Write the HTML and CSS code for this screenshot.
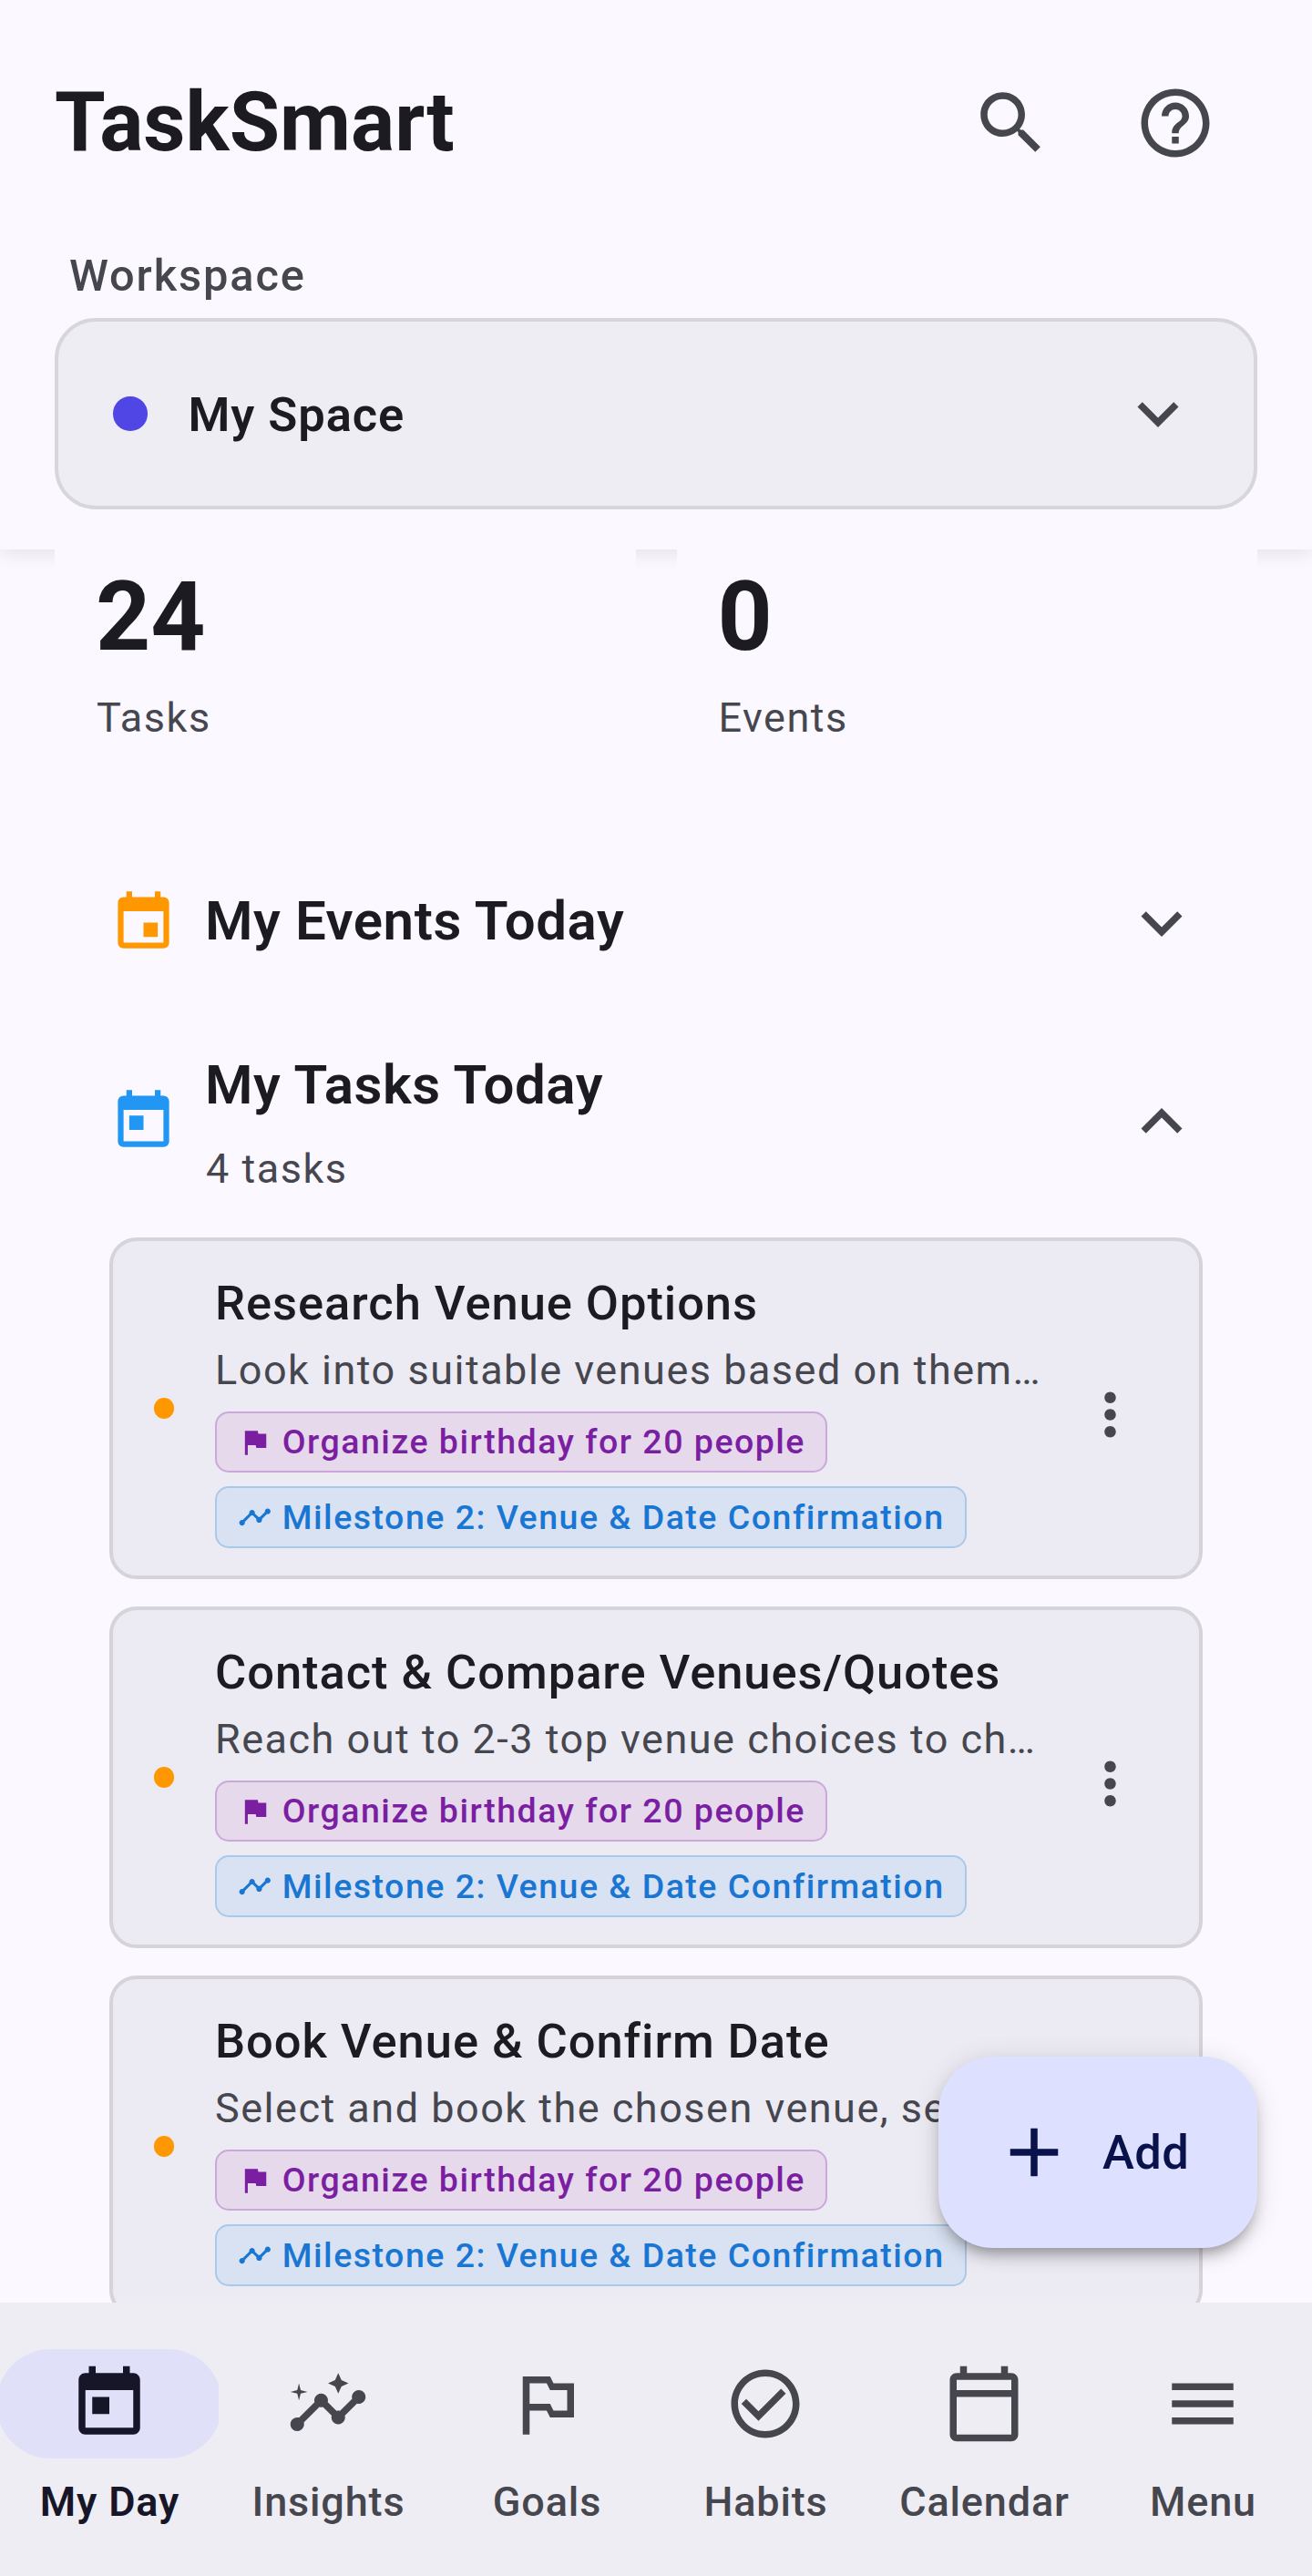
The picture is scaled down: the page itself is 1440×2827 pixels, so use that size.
FILE: index.html
```html
<!DOCTYPE html>
<html lang="en">
<head>
<meta charset="utf-8">
<title>TaskSmart</title>
<link rel="stylesheet" href="styles.css">
</head>
<body>
<svg class="sprite" aria-hidden="true">
  <symbol id="search" viewBox="0 0 24 24"><path d="M15.5 14h-.79l-.28-.27C15.41 12.59 16 11.11 16 9.5 16 5.91 13.09 3 9.5 3S3 5.91 3 9.5 5.91 16 9.5 16c1.61 0 3.09-.59 4.23-1.57l.27.28v.79l5 4.99L20.49 19l-4.99-5zm-6 0C7.01 14 5 11.99 5 9.5S7.01 5 9.5 5 14 7.01 14 9.5 11.99 14 9.5 14z"/></symbol>
  <symbol id="help" viewBox="0 0 24 24"><path d="M11 18h2v-2h-2v2zm1-16C6.48 2 2 6.48 2 12s4.48 10 10 10 10-4.480 10-10S17.52 2 12 2zm0 18c-4.410 0-8-3.590-8-8s3.590-8 8-8 8 3.590 8 8-3.590 8-8 8zm0-14c-2.210 0-4 1.790-4 4h2c0-1.100.9-2 2-2s2 .9 2 2c0 2-3 1.750-3 5h2c0-2.250 3-2.500 3-5 0-2.210-1.790-4-4-4z"/></symbol>
  <symbol id="more" viewBox="0 0 24 24"><path d="M16.59 8.59L12 13.17 7.41 8.59 6 10l6 6 6-6z"/></symbol>
  <symbol id="less" viewBox="0 0 24 24"><path d="M12 8l-6 6 1.410 1.410L12 10.830l4.590 4.580L18 14z"/></symbol>
  <symbol id="event" viewBox="0 0 24 24"><path d="M17 12h-5v5h5v-5zM16 1v2H8V1H6v2H5c-1.110 0-1.990.9-1.990 2L3 19c0 1.100.89 2 2 2h14c1.100 0 2-.9 2-2V5c0-1.100-.9-2-2-2h-1V1h-2zm3 18H5V8h14v11z"/></symbol>
  <symbol id="today" viewBox="0 0 24 24"><path d="M19 3h-1V1h-2v2H8V1H6v2H5c-1.110 0-1.990.9-1.990 2L3 19c0 1.100.89 2 2 2h14c1.100 0 2-.9 2-2V5c0-1.100-.9-2-2-2zm0 16H5V8h14v11zM7 10h5v5H7z"/></symbol>
  <symbol id="flag" viewBox="0 0 24 24"><path d="M14.400 6L14 4H5v17h2v-7h5.600l.4 2h7V6z"/></symbol>
  <symbol id="timeline" viewBox="0 0 24 24"><path d="M23 8c0 1.100-.9 2-2 2-.18 0-.35-.02-.51-.07l-3.560 3.550c.05.16.07.34.07.52 0 1.100-.9 2-2 2s-2-.9-2-2c0-.18.02-.36.07-.52l-2.550-2.550c-.16.05-.34.07-.52.07s-.36-.02-.52-.07l-4.550 4.560c.05.16.07.33.07.51 0 1.100-.9 2-2 2s-2-.9-2-2 .9-2 2-2c.18 0 .35.02.51.07l4.560-4.550C8.020 9.360 8 9.180 8 9c0-1.100.9-2 2-2s2 .9 2 2c0 .18-.02.36-.07.52l2.550 2.550c.16-.05.34-.07.52-.07s.36.02.52.07l3.550-3.560C19.020 8.350 19 8.180 19 8c0-1.100.9-2 2-2s2 .9 2 2z"/></symbol>
  <symbol id="dots" viewBox="0 0 24 24"><path d="M12 8c1.100 0 2-.9 2-2s-.9-2-2-2-2 .9-2 2 .9 2 2 2zm0 2c-1.100 0-2 .9-2 2s.9 2 2 2 2-.9 2-2-.9-2-2-2zm0 6c-1.100 0-2 .9-2 2s.9 2 2 2 2-.9 2-2-.9-2-2-2z"/></symbol>
  <symbol id="add" viewBox="0 0 24 24"><path d="M19 13h-6v6h-2v-6H5v-2h6V5h2v6h6v2z"/></symbol>
  <symbol id="insights" viewBox="0 0 24 24"><path d="M21 8c-1.450 0-2.260 1.440-1.930 2.510l-3.550 3.560c-.3-.09-.74-.09-1.040 0l-2.550-2.550C12.270 10.450 11.460 9 10 9c-1.450 0-2.270 1.440-1.930 2.520l-4.560 4.550C2.440 15.740 1 16.550 1 18c0 1.100.9 2 2 2 1.450 0 2.260-1.440 1.930-2.510l4.550-4.560c.3.09.74.09 1.040 0l2.550 2.550C12.730 16.550 13.540 18 15 18c1.450 0 2.270-1.440 1.930-2.520l3.560-3.550c1.070.33 2.510-.48 2.510-1.930 0-1.100-.9-2-2-2z"/><path d="M15 9l.94-2.070L18 6l-2.060-.93L15 3l-.92 2.070L12 6l2.080.93zM3.500 11L4 9l2-.5L4 8l-.5-2L3 8l-2 .5L3 9z"/></symbol>
  <symbol id="goal" viewBox="0 0 24 24"><path d="M14 6l-1-2H5v17h2v-7h5l1 2h7V6h-6zm4 8h-4l-1-2H7V6h5l1 2h5v6z"/></symbol>
  <symbol id="check" viewBox="0 0 24 24"><path d="M16.590 7.580L10 14.170l-3.590-3.580L5 12l5 5 8-8zM12 2C6.480 2 2 6.480 2 12s4.480 10 10 10 10-4.480 10-10S17.520 2 12 2zm0 18c-4.420 0-8-3.580-8-8s3.580-8 8-8 8 3.580 8 8-3.580 8-8 8z"/></symbol>
  <symbol id="calendar" viewBox="0 0 24 24"><path d="M20 3h-1V1h-2v2H7V1H5v2H4c-1.100 0-2 .9-2 2v16c0 1.100.9 2 2 2h16c1.100 0 2-.9 2-2V5c0-1.100-.9-2-2-2zm0 18H4V10h16v11zm0-13H4V5h16v3z"/></symbol>
  <symbol id="menu" viewBox="0 0 24 24"><path d="M3 18h18v-2H3v2zm0-5h18v-2H3v2zm0-7v2h18V6H3z"/></symbol>
</svg>

<header class="header">
  <div class="title-row">
    <h1 class="title">TaskSmart</h1>
    <button class="icon-button" aria-label="Search"><svg class="icon"><use href="#search"/></svg></button>
    <button class="icon-button" aria-label="Help"><svg class="icon"><use href="#help"/></svg></button>
  </div>
  <div class="workspace-label">Workspace</div>
  <div class="workspace">
    <span class="workspace-dot"></span>
    <span class="workspace-name">My Space</span>
    <svg class="icon"><use href="#more"/></svg>
  </div>
</header>

<main class="content">
  <section class="stats">
    <div class="stat"><div class="stat-value">24</div><div class="stat-label">Tasks</div></div>
    <div class="stat"><div class="stat-value">0</div><div class="stat-label">Events</div></div>
  </section>

  <section class="section-head section-head-events">
    <svg class="section-icon orange"><use href="#event"/></svg>
    <h2 class="section-title">My Events Today</h2>
    <svg class="icon"><use href="#more"/></svg>
  </section>

  <section class="section-head section-head-tasks">
    <svg class="section-icon blue"><use href="#today"/></svg>
    <div class="section-text">
      <h2 class="section-title">My Tasks Today</h2>
      <div class="section-sub">4 tasks</div>
    </div>
    <svg class="icon"><use href="#less"/></svg>
  </section>

  <div class="tasks">
    <article class="task">
      <span class="task-dot"></span>
      <div class="task-body">
        <h3 class="task-title">Research Venue Options</h3>
        <p class="task-desc">Look into suitable venues based on them…</p>
        <div class="chips">
          <span class="chip goal"><svg class="chip-icon"><use href="#flag"/></svg>Organize birthday for 20 people</span>
          <span class="chip milestone"><svg class="chip-icon"><use href="#timeline"/></svg>Milestone 2: Venue &amp; Date Confirmation</span>
        </div>
      </div>
      <svg class="task-menu"><use href="#dots"/></svg>
    </article>
    <article class="task">
      <span class="task-dot"></span>
      <div class="task-body">
        <h3 class="task-title">Contact &amp; Compare Venues/Quotes</h3>
        <p class="task-desc">Reach out to 2-3 top venue choices to ch…</p>
        <div class="chips">
          <span class="chip goal"><svg class="chip-icon"><use href="#flag"/></svg>Organize birthday for 20 people</span>
          <span class="chip milestone"><svg class="chip-icon"><use href="#timeline"/></svg>Milestone 2: Venue &amp; Date Confirmation</span>
        </div>
      </div>
      <svg class="task-menu"><use href="#dots"/></svg>
    </article>
    <article class="task">
      <span class="task-dot"></span>
      <div class="task-body">
        <h3 class="task-title">Book Venue &amp; Confirm Date</h3>
        <p class="task-desc">Select and book the chosen venue, se…</p>
        <div class="chips">
          <span class="chip goal"><svg class="chip-icon"><use href="#flag"/></svg>Organize birthday for 20 people</span>
          <span class="chip milestone"><svg class="chip-icon"><use href="#timeline"/></svg>Milestone 2: Venue &amp; Date Confirmation</span>
        </div>
      </div>
      <svg class="task-menu"><use href="#dots"/></svg>
    </article>
  </div>
</main>

<button class="fab"><svg class="icon"><use href="#add"/></svg><span>Add</span></button>

<nav class="nav">
  <a class="tab active"><span class="tab-icon"><svg class="icon"><use href="#today"/></svg></span><span class="tab-label">My Day</span></a>
  <a class="tab"><span class="tab-icon"><svg class="icon"><use href="#insights"/></svg></span><span class="tab-label">Insights</span></a>
  <a class="tab"><span class="tab-icon"><svg class="icon"><use href="#goal"/></svg></span><span class="tab-label">Goals</span></a>
  <a class="tab"><span class="tab-icon"><svg class="icon"><use href="#check"/></svg></span><span class="tab-label">Habits</span></a>
  <a class="tab"><span class="tab-icon"><svg class="icon"><use href="#calendar"/></svg></span><span class="tab-label">Calendar</span></a>
  <a class="tab"><span class="tab-icon"><svg class="icon"><use href="#menu"/></svg></span><span class="tab-label">Menu</span></a>
</nav>
</body>
</html>
```
FILE: styles.css
```css
* { box-sizing: border-box; }

body {
  margin: 0;
  width: 1440px;
  height: 2827px;
  display: flex;
  flex-direction: column;
  position: relative;
  overflow: hidden;
  background: #fbf8ff;
  color: #1b1b21;
  font-family: Roboto, "Liberation Sans", sans-serif;
}

h1, h2, h3, p { margin: 0; white-space: nowrap; }
button { border: 0; padding: 0; background: none; font: inherit; color: inherit; }
svg { display: block; flex: none; fill: currentColor; }

.sprite { display: none; }
.icon { width: 90px; height: 90px; color: #46464f; }

/* Header */
.header {
  flex: none;
  height: 603px;
  padding: 45px 60px 0;
  background: #fbf8ff;
  box-shadow: 0 5px 20px rgba(0, 0, 0, 0.09);
}
.title-row { display: flex; align-items: center; height: 180px; }
.title { flex: 1; font-size: 90px; font-weight: 700; line-height: 120px; letter-spacing: 0; }
.icon-button { width: 180px; height: 180px; display: flex; align-items: center; justify-content: center; }
.workspace-label {
  margin: 48px 16px 16px;
  font-size: 48.75px;
  font-weight: 500;
  line-height: 60px;
  letter-spacing: 1.875px;
  color: #46464f;
}
.workspace {
  height: 210px;
  display: flex;
  align-items: center;
  padding: 0 60px;
  border: 4px solid #d7d6dc;
  border-radius: 45px;
  background: #eeedf3;
}
.workspace-dot { width: 37.5px; height: 37.5px; border-radius: 50%; background: #4f46e5; }
.workspace-name { flex: 1; margin-left: 45px; padding-top: 1px; font-size: 52.5px; font-weight: 600; letter-spacing: 0.9px; }

/* Scrolling content */
.content { flex: 1; min-height: 0; overflow: hidden; }
.stats { display: flex; gap: 45px; padding: 0 60px; height: 300px; }
.stat { flex: 1; padding: 15px 45px 0; background: #fbf8ff; }
.stat-value { font-size: 105px; font-weight: 700; line-height: 120px; }
.stat-label { margin-top: 20px; padding-left: 1px; font-size: 45px; line-height: 60px; letter-spacing: 1.5px; color: #46464f; }

.section-head { display: flex; align-items: center; padding: 0 120px 0 120px; }
.section-head-events { height: 219px; }
.section-head-tasks { height: 217px; }
.section-icon { width: 75px; height: 75px; margin-right: 30px; }
.section-text { flex: 1; }
.section-title { flex: 1; font-size: 60px; font-weight: 600; line-height: 87px; letter-spacing: 0.5625px; }
.section-head-events .section-title { padding-bottom: 5px; }
.section-sub { margin-top: 17px; padding-left: 1px; font-size: 45px; line-height: 64px; letter-spacing: 1.5px; color: #46464f; }
.orange { color: #ff9800; }
.blue { color: #2196f3; }

.tasks { display: flex; flex-direction: column; gap: 30px; padding: 19px 120px 0; }
.task {
  flex: none;
  height: 375px;
  display: flex;
  align-items: center;
  padding: 0 60px 0 44.5px;
  border: 4px solid #d5d4db;
  border-radius: 30px;
  background: #ecebf4;
}
.task-dot { flex: none; width: 22.5px; height: 22.5px; border-radius: 50%; background: #ff9800; }
.task-body { flex: 1; min-width: 0; margin-left: 45px; }
.task-title { font-size: 52.5px; font-weight: 500; line-height: 75px; letter-spacing: 0.9375px; }
.task-desc { font-size: 45px; line-height: 60px; letter-spacing: 1.5px; margin-top: 6px; color: #46464f; }
.chips { display: flex; flex-direction: column; align-items: flex-start; gap: 15px; margin-top: 15px; }
.chip {
  height: 67.5px;
  display: flex;
  align-items: center;
  padding: 0 22.5px;
  border: 2px solid;
  border-radius: 15px;
  font-size: 37.5px;
  font-weight: 500;
  letter-spacing: 1.5px;
  white-space: nowrap;
}
.chip-icon { width: 37.5px; height: 37.5px; margin-right: 11.75px; }
.goal { color: #7b1fa2; background: #e6d9ec; border-color: #cba8da; }
.milestone { color: #1976d2; background: #d9e2f2; border-color: #a9c9ea; }
.task-menu { width: 75px; height: 75px; margin-top: 14px; color: #46464f; }

/* Floating action button */
.fab {
  position: absolute;
  right: 60px;
  bottom: 360px;
  width: 350px;
  height: 210px;
  display: flex;
  align-items: center;
  gap: 30px;
  padding-left: 60px;
  border-radius: 60px;
  background: #dde0ff;
  color: #09124b;
  font-size: 52.5px;
  font-weight: 500;
  letter-spacing: 0.375px;
  box-shadow: 0 11px 11px -7px rgba(0, 0, 0, 0.2), 0 11px 15px rgba(0, 0, 0, 0.14), 0 4px 30px rgba(0, 0, 0, 0.12);
}
.fab .icon { color: inherit; }

/* Bottom navigation */
.nav { flex: none; height: 300px; display: flex; padding-top: 51px; background: #eeedf3; }
.tab { flex: 1; min-width: 0; overflow: hidden; display: flex; flex-direction: column; align-items: center; color: #46464f; }
.tab-icon { flex: none; width: 248px; height: 120px; display: flex; align-items: center; justify-content: center; border-radius: 60px; }
.tab-label { margin-top: 18px; padding-left: 1px; font-size: 45px; font-weight: 500; line-height: 60px; letter-spacing: 0.85px; }
.active { color: #171629; }
.active .icon { color: inherit; }
.active .tab-icon { background: #e0e0f8; }
.active .tab-label { font-weight: 600; }
```
